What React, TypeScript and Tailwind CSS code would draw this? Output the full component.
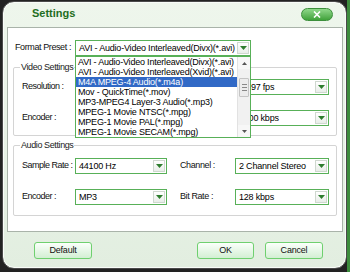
import React from "react";

function Arrow() {
  return (
    <div className="w-[12px] m-[1px] border border-[#cfd8cf] bg-gradient-to-b from-white to-[#e9eee9] flex items-center justify-center">
      <svg width="7" height="4" viewBox="0 0 7 4">
        <path d="M0 0h7L3.5 4z" fill="#2e7d2e" />
      </svg>
    </div>
  );
}

function Combo({ value, w }: { value: string; w: string }) {
  return (
    <div className={`${w} h-[16px] border border-[#58b058] bg-white flex items-stretch shrink-0`}>
      <div className="flex-1 pl-[3px] text-[9px] leading-[14px] text-black whitespace-nowrap overflow-hidden">{value}</div>
      <Arrow />
    </div>
  );
}

function Row({ l1, v1, l2, v2 }: { l1: string; v1: string; l2: string; v2: string }) {
  return (
    <div className="flex items-center h-[16px]">
      <span className="w-[53px] shrink-0 whitespace-nowrap tracking-[-0.5px]">{l1}</span>
      <Combo w="w-[92px]" value={v1} />
      <span className="ml-[13px] w-[55px] shrink-0 whitespace-nowrap tracking-[-0.4px]">{l2}</span>
      <Combo w="w-[94px]" value={v2} />
    </div>
  );
}

function Group({ title, children, pt, pb }: { title: string; children: React.ReactNode; pt: string; pb: string }) {
  return (
    <div className={`relative border border-[#d4d4d4] rounded-[2px] pl-[8px] pr-[7px] ${pt} ${pb} flex flex-col gap-[15px]`}>
      <span className="absolute -top-[6px] left-[6px] bg-white px-[1px] leading-[11px] text-[#222] tracking-[-0.4px]">{title}</span>
      {children}
    </div>
  );
}

const items = [
  "AVI - Audio-Video Interleaved(Divx)(*.avi)",
  "AVI - Audio-Video Interleaved(Xvid)(*.avi)",
  "M4A MPEG-4 Audio(*.m4a)",
  "Mov - QuickTime(*.mov)",
  "MP3-MPEG4 Layer-3 Audio(*.mp3)",
  "MPEG-1 Movie NTSC(*.mpg)",
  "MPEG-1 Movie PAL(*.mpg)",
  "MPEG-1 Movie SECAM(*.mpg)",
];

function ScrollArrow({ up }: { up?: boolean }) {
  return (
    <div className="h-[12px] flex items-center justify-center bg-[#f7f7f7]">
      <svg width="5" height="3" viewBox="0 0 5 3">
        <path d={up ? "M0 3h5L2.5 0z" : "M0 0h5L2.5 3z"} fill="#555" />
      </svg>
    </div>
  );
}

function Btn({ label, w }: { label: string; w: string }) {
  return (
    <div className={`${w} h-[17px] rounded-[3px] border border-[#6fd06f] bg-gradient-to-b from-[#fbfffb] to-[#d3efd3] flex items-center justify-center text-[9px] text-[#111]`}>
      {label}
    </div>
  );
}

export default function App() {
  return (
    <div className="w-[350px] h-[272px] bg-[linear-gradient(to_right,#222_347px,#3c8c3c_347px)] pt-[1px] pl-[2px] overflow-hidden font-['Liberation_Sans',Arial,sans-serif] text-[9px] tracking-[-0.2px] text-[#111]">
      <div className="w-[345px] h-[268px] rounded-[12px] border border-[#4a4a4a] bg-gradient-to-b from-[#eef6ec] to-[#e2eee0] shadow-[inset_0_0_0_1px_#f8fcf8] flex flex-col">
        <div className="h-[25px] flex items-start justify-between pl-[29px] pr-[13px]">
          <span className="mt-[5px] text-[11px] leading-[13px] font-bold text-[#1f6e1f] tracking-normal">Settings</span>
          <div className="mt-[6px] w-[32px] h-[13px] rounded-full border border-[#3b8f3b] bg-gradient-to-b from-[#8fd88a] to-[#3fa23a] flex items-center justify-center">
            <svg width="8" height="7" viewBox="0 0 8 7">
              <path d="M1 0.5L7 6.5M7 0.5L1 6.5" stroke="white" strokeWidth="1.6" />
            </svg>
          </div>
        </div>
        <div className="ml-[4px] w-[336px] bg-white border border-[#a9b3a9] px-[5px] pt-[12px] pb-[15px] flex flex-col">
          <div className="flex items-center h-[16px] pl-[2px]">
            <span className="w-[60px] shrink-0 whitespace-nowrap tracking-[-0.4px]">Format Preset :</span>
            <div className="relative">
              <Combo w="w-[176px]" value="AVI - Audio-Video Interleaved(Divx)(*.avi)" />
              <div className="absolute top-full left-0 w-[176px] h-[82px] border border-[#58b058] bg-white flex z-10">
                <div className="flex-1 flex flex-col">
                  {items.map((it, i) => (
                    <div
                      key={it}
                      className={`h-[10px] leading-[10px] pl-[2px] whitespace-nowrap overflow-hidden ${i === 2 ? "bg-[#3169c6] text-white" : "text-black"}`}
                    >
                      {it}
                    </div>
                  ))}
                </div>
                <div className="w-[13px] bg-[#f1f1f1] border-l border-[#e2e2e2] flex flex-col">
                  <ScrollArrow up />
                  <div className="h-[9px]" />
                  <div className="h-[19px] mx-[1px] bg-[#ececec] border border-[#c4c4c4] rounded-[1px] flex flex-col items-center justify-center gap-[2px]">
                    <div className="w-[5px] h-px bg-[#888]" />
                    <div className="w-[5px] h-px bg-[#888]" />
                    <div className="w-[5px] h-px bg-[#888]" />
                  </div>
                  <div className="flex-1" />
                  <ScrollArrow />
                </div>
              </div>
            </div>
          </div>
          <div className="mt-[11px]">
            <Group title="Video Settings" pt="pt-[11px]" pb="pb-[9px]">
              <Row l1="Resolution :" v1="" l2="" v2="29.97 fps" />
              <Row l1="Encoder :" v1="" l2="" v2="1000 kbps" />
            </Group>
          </div>
          <div className="mt-[9px]">
            <Group title="Audio Settings" pt="pt-[12px]" pb="pb-[10px]">
              <Row l1="Sample Rate :" v1="44100 Hz" l2="Channel :" v2="2 Channel Stereo" />
              <Row l1="Encoder :" v1="MP3" l2="Bit Rate :" v2="128 kbps" />
            </Group>
          </div>
        </div>
        <div className="mt-[10px] flex justify-between pl-[31px] pr-[23px]">
          <Btn label="Default" w="w-[58px]" />
          <div className="flex gap-[11px]">
            <Btn label="OK" w="w-[57px]" />
            <Btn label="Cancel" w="w-[58px]" />
          </div>
        </div>
      </div>
    </div>
  );
}
